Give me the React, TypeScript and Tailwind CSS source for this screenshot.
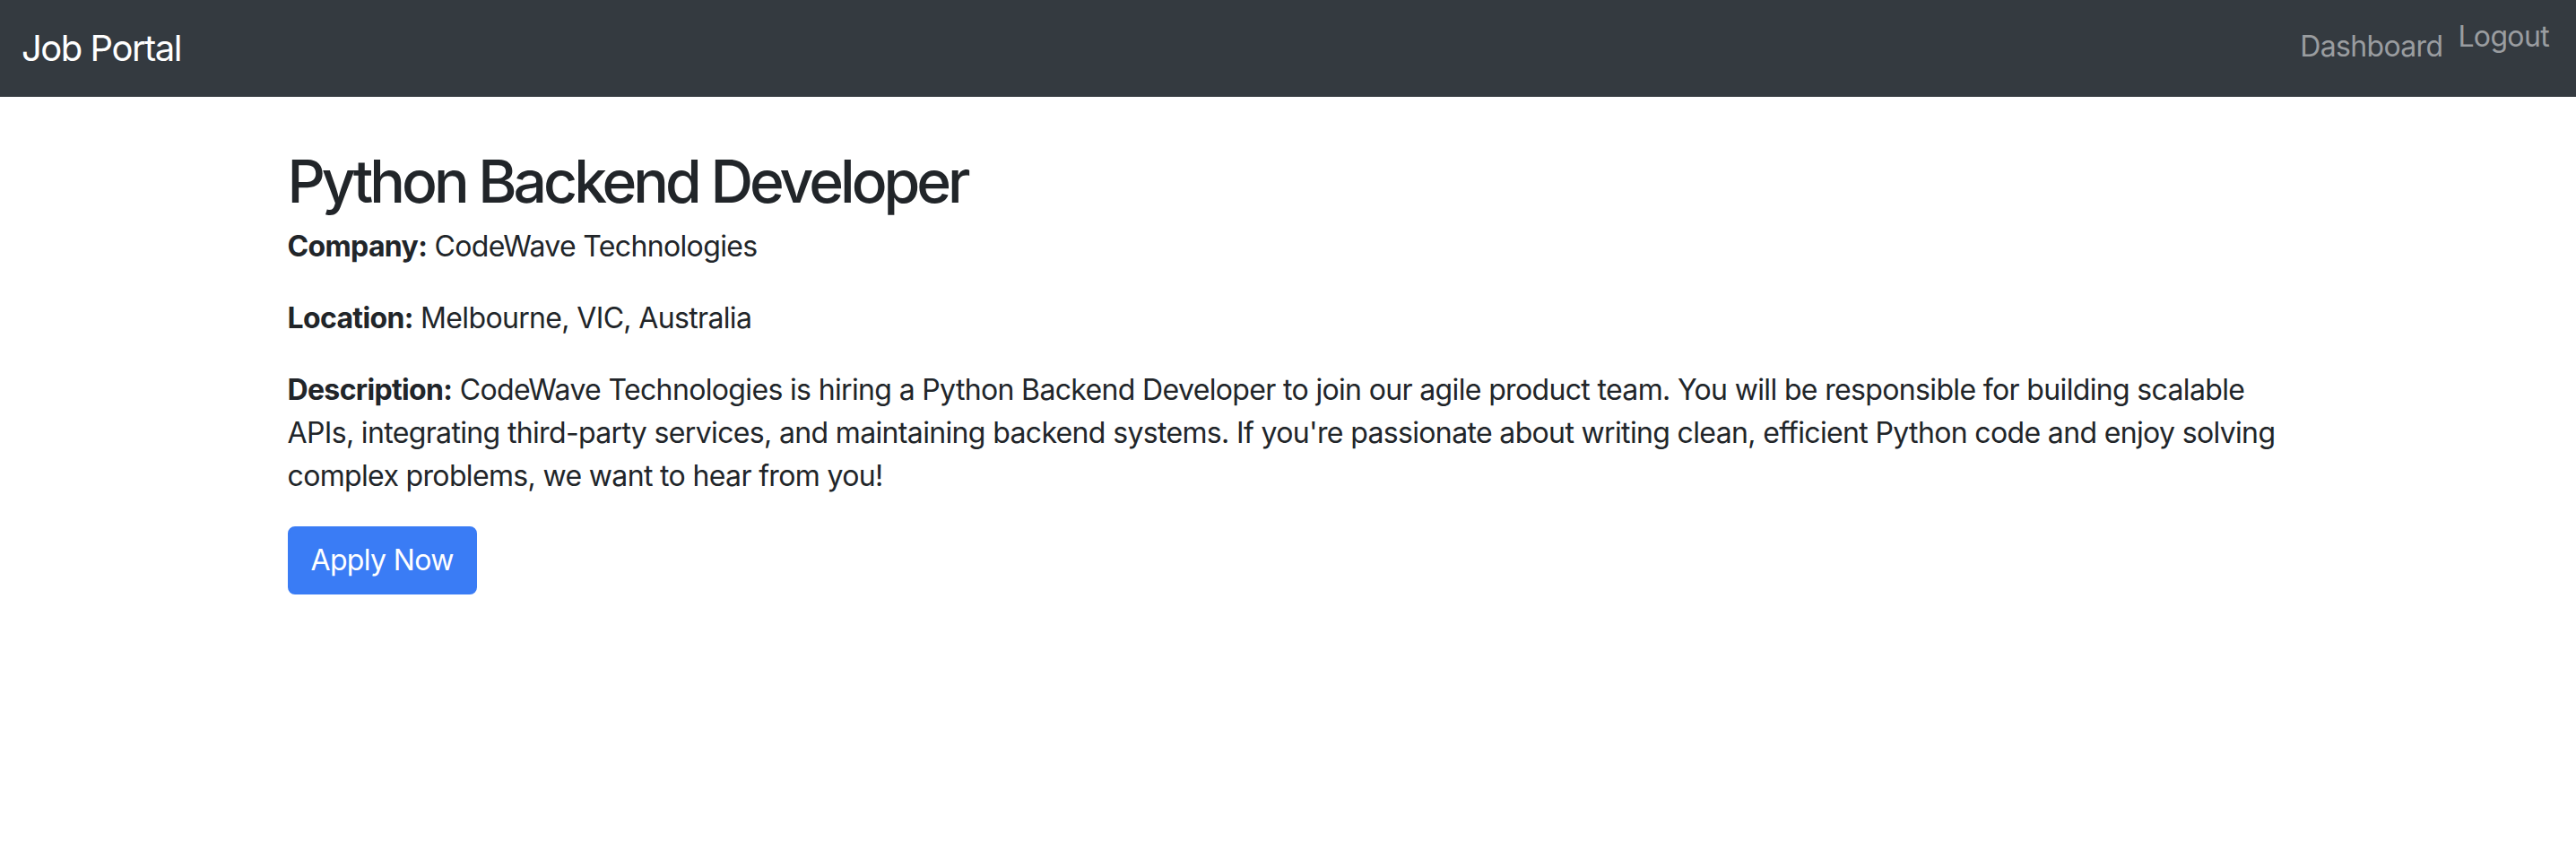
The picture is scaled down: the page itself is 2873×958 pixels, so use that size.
import React from "react";

export default function App() {
  return (
    <div className="min-h-screen bg-white font-['Inter',sans-serif] text-[#212529] tracking-[-0.65px]">
      <nav className="flex h-[108px] items-center justify-between bg-[#343a40] px-[24px]">
        <a href="#" className="text-[40px] leading-[60px] tracking-[-1.5px] text-white">
          Job Portal
        </a>
        <div className="flex h-full items-start gap-[17px]">
          <a href="#" className="mt-[28px] text-[32px] leading-[48px] text-[#9a9da0]">
            Dashboard
          </a>
          <button className="mt-[17px] mr-[6px] text-[32px] leading-[48px] text-[#9a9da0]">
            Logout
          </button>
        </div>
      </nav>

      <main className="mx-auto max-w-[2280px] px-[24px] pt-[58px]">
        <h1 className="mb-[12px] text-[66px] font-medium leading-[1.1] tracking-[-4px]">
          Python Backend Developer
        </h1>
        <p className="mb-[32px] text-[32px] leading-[48px]">
          <strong className="font-bold">Company:</strong> CodeWave Technologies
        </p>
        <p className="mb-[32px] text-[32px] leading-[48px]">
          <strong className="font-bold">Location:</strong> Melbourne, VIC, Australia
        </p>
        <p className="mb-[32px] text-[32px] leading-[48px]">
          <strong className="font-bold">Description:</strong> CodeWave Technologies is
          hiring a Python Backend Developer to join our agile product team. You will be
          responsible for building scalable APIs, integrating third-party services, and
          maintaining backend systems. If you're passionate about writing clean, efficient
          Python code and enjoy solving complex problems, we want to hear from you!
        </p>
        <button className="rounded-[8px] border-2 border-[#3a7cf5] bg-[#3a7cf5] px-[24px] py-[12px] text-[32px] leading-[48px] text-white">
          Apply Now
        </button>
      </main>
    </div>
  );
}
